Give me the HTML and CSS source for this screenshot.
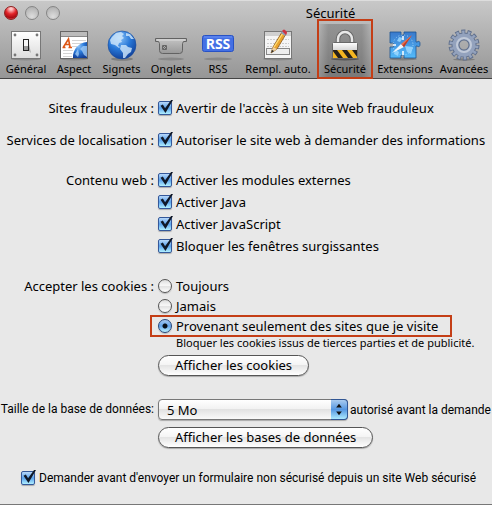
FILE: index.html
```
<!DOCTYPE html>
<html lang="fr">
<head>
<meta charset="utf-8">
<title>Sécurité</title>
<link rel="stylesheet" href="styles.css">
</head>
<body>
<div class="window">
  <header class="chrome">
    <div class="titlebar">
      <div class="lights">
        <button class="light close" type="button" aria-label="Fermer"></button>
        <button class="light" type="button" aria-label="Réduire"></button>
        <button class="light" type="button" aria-label="Agrandir"></button>
      </div>
      <h1 class="title">Sécurité</h1>
    </div>
    <nav class="toolbar">
      <button class="tool" type="button">
        <svg class="icon" viewBox="0 0 32 32">
          <defs>
            <linearGradient id="plate" x1="0" y1="0" x2="0" y2="1"><stop offset="0" stop-color="#fff"/><stop offset="1" stop-color="#dcdcdc"/></linearGradient>
            <radialGradient id="globe" cx=".4" cy=".25" r=".8"><stop offset="0" stop-color="#8cc4fa"/><stop offset=".5" stop-color="#2878d8"/><stop offset="1" stop-color="#103c94"/></radialGradient>
          </defs>
          <ellipse cx="16" cy="30" rx="15" ry="1.5" fill="#777" opacity=".6"/>
          <rect x="1.5" y="2.5" width="29" height="27" fill="url(#plate)" stroke="#777"/>
          <g fill="#777"><circle cx="5" cy="6" r="1.4"/><circle cx="27" cy="6" r="1.4"/><circle cx="5" cy="26" r="1.4"/><circle cx="27" cy="26" r="1.4"/></g>
          <path d="M18 21l3 3-3-13z" fill="#aaa"/>
          <rect x="13.5" y="10.5" width="5" height="11" fill="#999" stroke="#222"/>
          <rect x="14" y="11" width="4" height="6" fill="#f8f8f8"/>
        </svg>
        <span>Général</span>
      </button>
      <button class="tool" type="button">
        <svg class="icon" viewBox="0 0 32 32">
          <ellipse cx="16" cy="30" rx="14" ry="1.5" fill="#777" opacity=".6"/>
          <rect x="2.5" y="2.5" width="27" height="27" fill="#fff" stroke="#666"/>
          <rect x="3" y="3" width="26" height="4" fill="#bbb"/>
          <path d="M3 7.5h26" stroke="#888"/>
          <path d="M14 11.5h14M14 14.500h12M14 17.500h5M5 21.500h10M5 24.500h9M5 27.500h9" stroke="#d4d4d4"/>
          <path d="M29 13a15 15 0 0 0-14 16h14z" fill="url(#globe)"/>
          <path d="M29 17l-4 0-3 3 2 2 2 4 3 2zM20 20l-3 5 3 3 1-3z" fill="#a8d0f6" opacity=".75"/>
          <path d="M4.500 18.500h3M5.500 18l5-8 1.500 8M7.500 15.500h4M10.500 18.500h3.500" fill="none" stroke="#dd5716" stroke-width="1.600"/>
        </svg>
        <span>Aspect</span>
      </button>
      <button class="tool" type="button">
        <svg class="icon" viewBox="0 0 32 32">
          <ellipse cx="16" cy="30" rx="11" ry="1.8" fill="#666" opacity=".6"/>
          <circle cx="16" cy="16" r="14" fill="url(#globe)" stroke="#1a4c9c" stroke-width=".6"/>
          <path d="M6 8l4-4 5-1 3 2-2 2 2 2-3 2 1 2-3 1-1 3 2 1-1 1-4-3-4-1-1-4zM20 4l4 1 4 5-3 0-2-3-3 0zM15 16l5 0 2 2 4 1-1 4-3 2-3 4-2 0 0-5-3-4z" fill="#d2e8fb" opacity=".8"/>
        </svg>
        <span>Signets</span>
      </button>
      <button class="tool" type="button">
        <svg class="icon" viewBox="0 0 32 32">
          <defs><linearGradient id="tab" x1="0" y1="0" x2="0" y2="1"><stop offset="0" stop-color="#c4c4c4"/><stop offset="1" stop-color="#989898"/></linearGradient></defs>
          <ellipse cx="16" cy="30" rx="13" ry="1.5" fill="#777" opacity=".6"/>
          <path d="M.5 9.500h31v3h-3l-1 2v7q0 3-3 3h-17q-3 0-3-3v-7l-1-2h-3z" fill="url(#tab)" stroke="#626262"/>
          <path d="M2 11h28" stroke="#ddd"/>
          <path d="M7.500 16.500h4v4h-4zM8 17l3 3M11 17l-3 3" fill="none" stroke="#666"/>
        </svg>
        <span>Onglets</span>
      </button>
      <button class="tool" type="button">
        <svg class="icon" viewBox="0 0 32 32">
          <ellipse cx="16" cy="30" rx="14" ry="1.5" fill="#777" opacity=".6"/>
          <rect x=".5" y="6.500" width="31" height="16" rx="2" fill="#4470e4" stroke="#2852c4"/>
          <path d="M2 8h28" stroke="#6c92f4"/>
          <text class="rss" x="16" y="20" text-anchor="middle">RSS</text>
        </svg>
        <span>RSS</span>
      </button>
      <button class="tool" type="button">
        <svg class="icon" viewBox="0 0 32 32">
          <ellipse cx="16" cy="30" rx="15" ry="1.5" fill="#777" opacity=".6"/>
          <rect x="2.500" y="2.500" width="27" height="27" fill="#f5f5f5" stroke="#777"/>
          <rect x="3" y="3" width="26" height="4" fill="#d0d0d0"/>
          <path d="M5 10.500h22M5 14.500h22M5 17.500h22" stroke="#ccc" stroke-dasharray="2 1"/>
          <rect x="4.500" y="19.500" width="23" height="6" fill="#eee" stroke="#888"/>
          <path d="M9 24l2-6L20 3l4 2-9 15z" fill="#eaa42e" stroke="#8a5718" stroke-width=".8"/>
          <path d="M12 18L21 4" stroke="#ffdf79" stroke-width="1.300"/>
          <path d="M9 24l2-6 4 2z" fill="#edcf9f"/><path d="M9 24l1-3 2 1z" fill="#222"/>
          <path d="M19 4l1-2 4 3-1 2z" fill="#8d9cba"/><path d="M20 2q2-3 4 0 2 1 0 4z" fill="#ce3342"/>
        </svg>
        <span>Rempl. auto.</span>
      </button>
      <button class="tool selected" type="button">
        <svg class="icon" viewBox="0 0 32 32">
          <defs>
            <linearGradient id="steel" x1="0" y1="0" x2="0" y2="1"><stop offset="0" stop-color="#fff"/><stop offset="1" stop-color="#aaa"/></linearGradient>
            <clipPath id="band"><path d="M4 21h24v8H4z"/></clipPath>
          </defs>
          <ellipse cx="16" cy="30" rx="14" ry="1.5" fill="#333" opacity=".6"/>
          <path d="M9 15V10a7 7 0 0 1 14 0v5" fill="none" stroke="#666" stroke-width="4.500"/>
          <path d="M9 15V10a7 7 0 0 1 14 0v5" fill="none" stroke="#e8e8e8" stroke-width="2.500"/>
          <rect x="3.500" y="13.500" width="25" height="16" rx="1" fill="url(#steel)" stroke="#686868"/>
          <path d="M4 21h24v8H4z" fill="#f3b621"/>
          <path d="M3 21h5l6 8H9zM13 21h5l6 8h-5zM23 21h5l6 8h-5z" fill="#26211b" clip-path="url(#band)"/>
        </svg>
        <span>Sécurité</span>
      </button>
      <button class="tool" type="button">
        <svg class="icon" viewBox="0 0 32 32">
          <defs><linearGradient id="puzzle" x1="0" y1="0" x2="0" y2="1"><stop offset="0" stop-color="#3979cc"/><stop offset="1" stop-color="#54bbfa"/></linearGradient></defs>
          <ellipse cx="14" cy="30" rx="14" ry="1.5" fill="#666" opacity=".6"/>
          <path d="M1 3h11v1q-1 2 1.500 2T15 4V3h12v10h1q3-2 3 2t-3 2h-1v12H15v-1q1-2-1.500-2T12 28v1H1V18h1q3 1 3-2t-3-2H1z" fill="url(#puzzle)" stroke="#1d5391" stroke-width=".8"/>
          <circle cx="14" cy="16" r="10" fill="none" stroke="#a6d5f8" stroke-dasharray="1 2"/>
          <path d="M16 17l8 1-2 7-4-2zM6 20l4 3-1 4-4-2zM10 8l4 1-3 4-3-1z" fill="#9bd8ff" opacity=".85"/>
          <path d="M14 7v4M14 22v4M4 16h3" stroke="#fff" stroke-width="1.500"/>
          <path d="M3 24l9-9 3 3z" fill="#edf5fc"/><path d="M23 6L12 15l3 3z" fill="#e9714f"/><path d="M23 6L13.500 16.500 15 18z" fill="#b93d29"/>
        </svg>
        <span>Extensions</span>
      </button>
      <button class="tool" type="button">
        <svg class="icon" viewBox="0 0 32 32">
          <ellipse cx="16" cy="30.500" rx="11" ry="1.2" fill="#666" opacity=".6"/>
          <circle cx="16" cy="16" r="13" fill="none" stroke="#5f6f8c" stroke-width="5" stroke-dasharray="3.8 2.034"/>
          <circle cx="16" cy="16" r="8.500" fill="none" stroke="#5f6f8c" stroke-width="8"/>
          <circle cx="16" cy="16" r="12.500" fill="none" stroke="#93a2bd" stroke-width="4" stroke-dasharray="2.4 3.210" stroke-dashoffset="-.6"/>
          <circle cx="16" cy="16" r="8.500" fill="none" stroke="#93a2bd" stroke-width="6"/>
          <circle cx="16" cy="16" r="7" fill="none" stroke="#c1cad9" stroke-width="2"/>
        </svg>
        <span>Avancées</span>
      </button>
    </nav>
  </header>

  <form class="settings">
    <div class="row">
      <span class="caption">Sites frauduleux :</span>
      <label class="option"><input class="check" type="checkbox" checked>Avertir de l'accès à un site Web frauduleux</label>
    </div>
    <div class="row">
      <span class="caption">Services de localisation :</span>
      <label class="option"><input class="check" type="checkbox" checked>Autoriser le site web à demander des informations</label>
    </div>
    <div class="row web">
      <span class="caption">Contenu web :</span>
      <div class="stack">
        <label class="option"><input class="check" type="checkbox" checked>Activer les modules externes</label>
        <label class="option"><input class="check" type="checkbox" checked>Activer Java</label>
        <label class="option"><input class="check" type="checkbox" checked>Activer JavaScript</label>
        <label class="option"><input class="check" type="checkbox" checked>Bloquer les fenêtres surgissantes</label>
      </div>
    </div>
    <div class="row cookies">
      <span class="caption">Accepter les cookies :</span>
      <div class="stack tight">
        <label class="option"><input class="radio" type="radio" name="cookies">Toujours</label>
        <label class="option"><input class="radio" type="radio" name="cookies">Jamais</label>
        <label class="option framed"><input class="radio" type="radio" name="cookies" checked>Provenant seulement des sites que je visite</label>
        <p class="note">Bloquer les cookies issus de tierces parties et de publicité.</p>
        <button class="push" type="button">Afficher les cookies</button>
      </div>
    </div>
    <div class="row database">
      <label class="caption small" for="size">Taille de la base de données:</label>
      <div class="stack">
        <div class="quota">
          <span class="popup">
            <select id="size"><option>5 Mo</option></select>
            <svg class="arrows" viewBox="0 0 16 20"><path d="M8 4l3 4H5zM8 16l3-4H5z" fill="#111"/></svg>
          </span>
          <span class="small">autorisé avant la demande</span>
        </div>
        <button class="push" type="button">Afficher les bases de données</button>
      </div>
    </div>
    <label class="option ask small"><input class="check" type="checkbox" checked>Demander avant d'envoyer un formulaire non sécurisé depuis un site Web sécurisé</label>
  </form>
</div>
</body>
</html>
```
FILE: styles.css
```
* { box-sizing: border-box; }

body {
  margin: 0;
  background: #e8e8e8;
  color: #000;
  font: 13px/20px "Noto Sans", "Open Sans", sans-serif;
}

button, select { font: inherit; color: inherit; }

.window {
  min-height: 100vh;
  overflow: hidden;
  border-bottom: 1px solid #777;
}

.chrome {
  background: linear-gradient(#c8c8c8, #969696);
  border-top: 1px solid #ddd;
  border-bottom: 1px solid #444;
}

.titlebar {
  display: flex;
  align-items: center;
  height: 23px;
}

.lights { display: flex; gap: 7px; padding-left: 4px; }

.light {
  width: 14px;
  height: 14px;
  padding: 0;
  border: 1px solid #858585;
  border-radius: 50%;
  background: radial-gradient(circle at 50% 80%, #ddd, #aaa);
}

.light.close {
  border-color: #8c2020;
  background: radial-gradient(circle at 50% 15%, #ffc4c4 10%, #e3262b 45%, #a90b12 75%, #ff7777);
}

.title {
  flex: 1;
  margin: 0;
  padding-left: 109px;
  font-size: 13px;
  font-weight: 400;
  text-align: center;
}

.toolbar {
  display: grid;
  grid-template-columns: 48fr 48fr 47fr 52fr 42fr 78fr 56fr 64fr 54fr;
  padding: 0 1px 0 2px;
}

.tool {
  position: relative;
  display: flex;
  flex-direction: column;
  align-items: center;
  min-width: 0;
  padding: 5px 0 2px;
  border: 0;
  background: none;
  font-size: 11px;
  line-height: 15px;
  white-space: nowrap;
}

.icon { width: 32px; height: 32px; }

.rss { font: 700 14px "Open Sans", sans-serif; fill: #fff; }

.selected { background: linear-gradient(90deg, #0000, #0003 20%, #0003 80%, #0000); }

.selected::after {
  content: "";
  position: absolute;
  inset: -5px 0 -1px;
  border: 2px solid #c43e16;
}

.settings { padding: 19px 0 8px; }

.row {
  display: grid;
  grid-template-columns: 154px max-content;
  column-gap: 4px;
  margin-bottom: 12px;
  white-space: nowrap;
}

.caption { text-align: right; }
.small { font-family: Roboto, "Open Sans", sans-serif; font-size: 12px; }

.web { margin-top: 20px; }
.cookies { margin-top: 20px; }

.stack { display: flex; flex-direction: column; align-items: flex-start; gap: 2px; }
.tight { gap: 0; }

.option { display: flex; align-items: center; gap: 4px; }

.check, .radio {
  position: relative;
  flex: none;
  appearance: none;
  width: 14px;
  height: 14px;
  margin: 0;
}

.check {
  border: 1px solid #34589a;
  border-radius: 2px;
  background: linear-gradient(#b8d8fa, #5aa2ed 50%, #b0efff);
  box-shadow: 0 1px 1px #0004;
}

.check:checked::after {
  content: "";
  position: absolute;
  inset: -2px -2px 1px 1px;
  background: #101828;
  clip-path: polygon(4% 45%, 22% 35%, 39% 64%, 85% 0, 100% 0, 42% 100%);
}

.radio {
  border: 1px solid #555;
  border-radius: 50%;
  background: linear-gradient(#ddd, #f8f8f8 45%, #e2e2e2 55%, #fff);
  box-shadow: 0 1px 1px #0003;
}

.radio:checked {
  border-color: #264578;
  background:
    radial-gradient(circle, #081018 2px, #0000 3px),
    linear-gradient(#a7c9ef, #63a5ec 50%, #bdf3ff);
}

.framed { position: relative; }

.framed::after {
  content: "";
  position: absolute;
  inset: -1px -14px -1px -8px;
  border: 2px solid #c43e16;
}

.note { margin: 0 0 5px 18px; font-size: 11px; line-height: 14px; }

.push {
  height: 21px;
  padding: 0 16px;
  border: 1px solid #555;
  border-radius: 11px;
  background: linear-gradient(#fff, #f4f4f4 48%, #e4e4e4 50%, #fff);
  box-shadow: 0 1px 1px #0004;
  line-height: 19px;
}

.database { margin-top: 23px; }
.database .stack { gap: 7px; }

.quota { display: flex; align-items: center; gap: 2px; }

.popup {
  display: flex;
  position: relative;
  width: 190px;
  height: 21px;
}

.popup select {
  appearance: none;
  width: 100%;
  padding: 0 8px;
  border: 1px solid #777;
  border-radius: 4px;
  background: linear-gradient(#fff, #f2f2f2 48%, #e2e2e2 50%, #fafafa);
  box-shadow: 0 1px 1px #0004;
}

.arrows {
  position: absolute;
  top: 0;
  right: 0;
  width: 17px;
  height: 21px;
  border: 1px solid #315694;
  border-left: 0;
  border-radius: 0 4px 4px 0;
  background: linear-gradient(#a9cbf0, #5597e2 50%, #aceaff);
  pointer-events: none;
}

.ask { margin: 20px 0 0 21px; white-space: nowrap; }
```
